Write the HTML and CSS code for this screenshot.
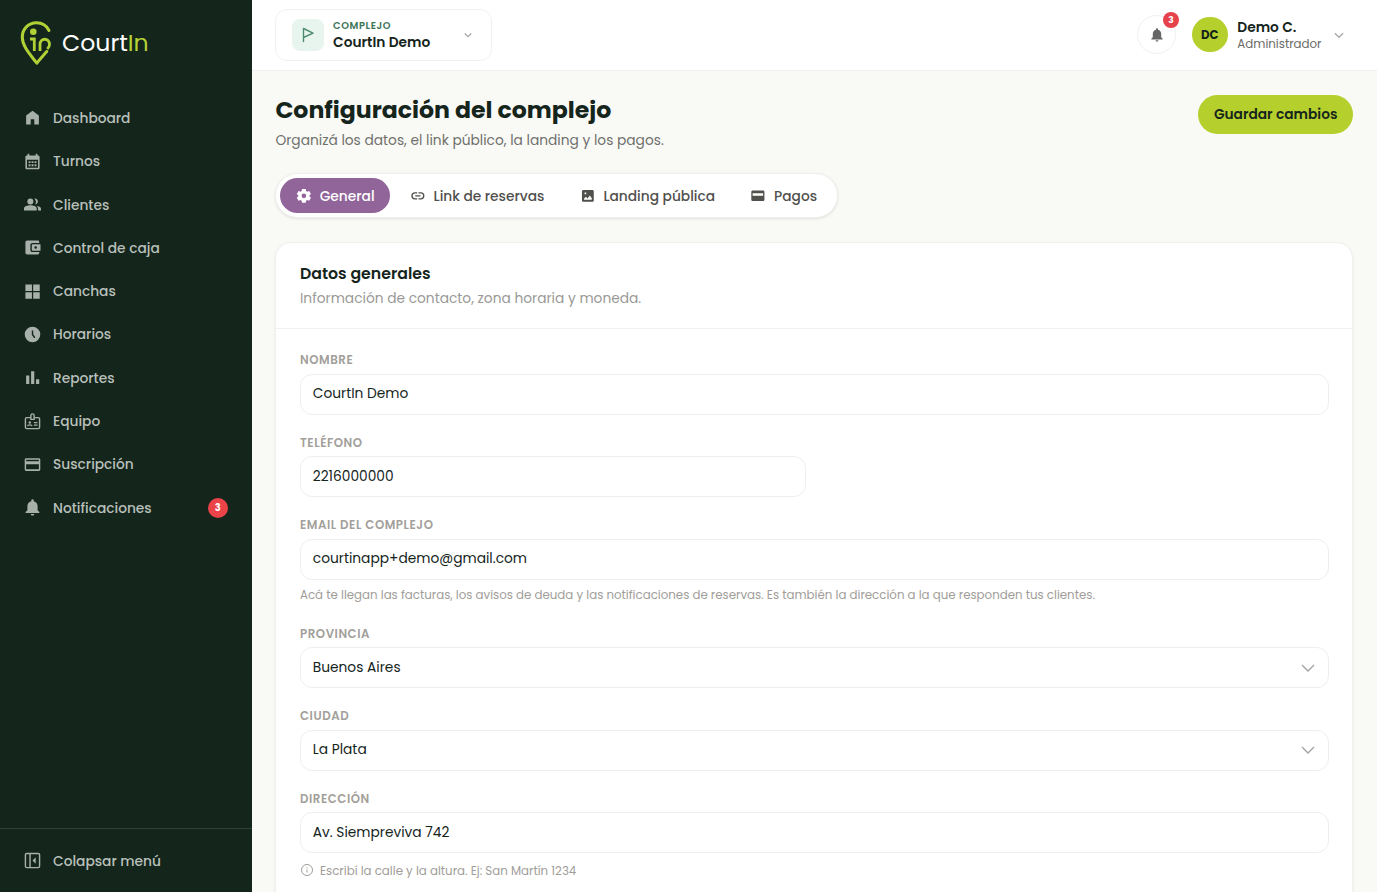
FILE: index.html
```html
<!DOCTYPE html>
<html lang="es">
<head>
  <meta charset="UTF-8" />
  <title>CourtIn - Configuración del complejo</title>
  <link rel="stylesheet" href="styles.css">
</head>
<body>
  <div class="app">
    <aside class="sidebar">
      <div class="logo">
        <svg class="logo-pin" viewBox="0 0 32 46" fill="none" stroke="#b0d136" stroke-linecap="round">
          <path d="M29 10.500C26.500 5.500 22 2.800 16.500 2.800 8.500 2.800 2.300 9 2.300 17c0 9.500 8 17.500 14.500 26.200 3.500-4.700 6.500-7.700 10-11.700" stroke-width="3" stroke-linejoin="round"/>
          <circle cx="13.300" cy="11.800" r="3.300" fill="#b0d136" stroke="none"/>
          <path d="M10 19h4.300V31M20 31v-6.500c0-7 9.500-7 9.500 0 0 2-.7 3-2.300 4.500" stroke-width="2.800" stroke-linecap="butt"/>
        </svg>
        <span class="logo-text">Court<b>In</b></span>
      </div>
      <nav class="menu">
        <a class="menu-item"><svg viewBox="0 0 24 24"><path d="M12 2.500 3 9.300V22H9.500v-7.500h5V22H21V9.300z"/></svg><span>Dashboard</span></a>
        <a class="menu-item"><svg viewBox="0 0 24 24"><path fill-rule="evenodd" d="M5 1h2.500v2.500h9V1H19v2.500h1c1.100 0 2 .9 2 2V21c0 1.100-.9 2-2 2H4c-1.100 0-2-.9-2-2V5.500c0-1.100.9-2 2-2h1zM4.200 9.500v11.300h15.600V9.500zM6.500 11.500h2.700v2.700H6.500zm4.200 0h2.700v2.700h-2.700zm4.200 0h2.700v2.700h-2.700zM6.500 16h2.700v2.700H6.500zm4.200 0h2.700v2.700h-2.700zm4.200 0h2.700v2.700h-2.700z"/></svg><span>Turnos</span></a>
        <a class="menu-item"><svg viewBox="0 0 24 24"><path d="M9 3.500a4.300 4.300 0 1 1 0 8.600 4.300 4.300 0 0 1 0-8.600zM0 20.500v-2.800c0-3 5-4.500 9-4.500s9 1.500 9 4.500v2.800zM14.500 3.700c5.500-1.200 7.500 7 1.300 8.300 1.600-2.300 1.400-6-1.300-8.300zM17.500 13.800c3.500.5 6.500 1.800 6.500 4.200v2.500h-4.200v-2.800c0-1.600-.8-2.900-2.300-3.900z"/></svg><span>Clientes</span></a>
        <a class="menu-item"><svg viewBox="0 0 24 24"><path fill-rule="evenodd" d="M21.500 18.500v1.300c0 1.100-.9 2-2 2h-15c-1.300 0-2.500-1-2.500-2.300v-15C2 3.200 3.200 2.200 4.500 2.200h15c1.100 0 2 .9 2 2v1.300H12c-1.700 0-3 1.300-3 3v7c0 1.700 1.300 3 3 3zM12.500 7.500h10.800v9H12.500c-.8 0-1.500-.6-1.500-1.400V9c0-.9.700-1.500 1.500-1.500zm4 2.700a1.800 1.800 0 1 0 0 3.600 1.800 1.800 0 0 0 0-3.600z"/></svg><span>Control de caja</span></a>
        <a class="menu-item"><svg viewBox="0 0 24 24"><path d="M2 2h9.200v9.200H2zM13 2h9.200v9.200H13zM2 13h9.200v9.200H2zM13 13h9.200v9.200H13z"/></svg><span>Canchas</span></a>
        <a class="menu-item"><svg viewBox="0 0 24 24"><path fill-rule="evenodd" d="M12 1a11 11 0 1 0 0 22 11 11 0 0 0 0-22zM11 6.500h2v5.300l3 4.200-1.700 1.200-3.300-4.700z"/></svg><span>Horarios</span></a>
        <a class="menu-item"><svg viewBox="0 0 24 24"><path d="M3 9h4.500v12H3zM10 3h4.500v18H10zM17 14.500h4.500V21H17z"/></svg><span>Reportes</span></a>
        <a class="menu-item"><svg viewBox="0 0 24 24" fill="none" stroke="currentColor" stroke-width="2"><path d="M9 6.500H4c-1 0-2 .7-2 2V20c0 1.200 1 2 2 2h16c1 0 2-.8 2-2V8.500c0-1.300-1-2-2-2h-5"/><path d="M9.700 9V3.500c0-3 4.600-3 4.600 0V9z"/><path d="M14 13.500h5M14 17h5M5 18.500c.5-2.500 6-2.500 6.500 0" stroke-width="1.700"/><circle cx="8.200" cy="13.500" r="1.700" fill="currentColor" stroke="none"/></svg><span>Equipo</span></a>
        <a class="menu-item"><svg viewBox="0 0 24 24"><path fill-rule="evenodd" d="M3 3h18c1.100 0 2 .9 2 2v14c0 1.100-.9 2-2 2H3c-1.100 0-2-.9-2-2V5c0-1.100.9-2 2-2zm0 2.300v2.200h18V5.300zM3 11.500v7.200h18v-7.200z"/></svg><span>Suscripción</span></a>
        <a class="menu-item"><svg viewBox="0 0 24 24"><path d="M12 .5c1 0 1.700.7 1.700 1.700v.9c3.500.7 5.500 3.700 5.500 7.100V16l2.500 2.400v1.400H2.300v-1.400L4.800 16v-5.800c0-3.400 2-6.400 5.500-7.100v-.9C10.300 1.200 11 .5 12 .5zM9.500 21h5c0 3.200-5 3.200-5 0z"/></svg><span>Notificaciones</span><em class="menu-badge">3</em></a>
      </nav>
      <div class="collapse">
        <a class="menu-item"><svg viewBox="0 0 24 24" fill="none" stroke="currentColor" stroke-width="2"><rect x="2" y="2" width="20" height="20" rx="2"/><path d="M8.500 2v20"/><path d="m16.500 7.500-4.500 4.500 4.500 4.500z" fill="currentColor" stroke="none"/></svg><span>Colapsar menú</span></a>
      </div>
    </aside>

    <div class="content">
      <header class="topbar">
        <div class="complex">
          <div class="complex-icon">
            <svg viewBox="0 0 16 16" fill="none" stroke="#4d8a6e" stroke-width="1.400" stroke-linecap="round" stroke-linejoin="round"><path d="M3.500 14.500v-13l9.500 4.700-9.500 4.300"/></svg>
          </div>
          <div class="complex-text">
            <small>COMPLEJO</small>
            <strong>CourtIn Demo</strong>
          </div>
          <svg class="chev chev-small" viewBox="0 0 10 10"><path d="m2.300 3.700 2.700 2.700 2.700-2.700"/></svg>
        </div>
        <div class="user">
          <div class="bell">
            <svg viewBox="0 0 24 24"><path d="M12 .5c1 0 1.700.7 1.700 1.700v.9c3.500.7 5.500 3.700 5.500 7.100V16l2.500 2.400v1.400H2.300v-1.400L4.800 16v-5.800c0-3.400 2-6.400 5.500-7.100v-.9C10.300 1.200 11 .5 12 .5zM9.500 21h5c0 3.200-5 3.200-5 0z"/></svg>
            <em class="bell-badge">3</em>
          </div>
          <div class="avatar">DC</div>
          <div class="user-text">
            <strong>Demo C.</strong>
            <span>Administrador</span>
          </div>
          <svg class="chev" viewBox="0 0 10 10"><path d="m1.600 3.500 3.400 3.400 3.400-3.400"/></svg>
        </div>
      </header>

      <main class="page">
        <div class="page-head">
          <div>
            <h1>Configuración del complejo</h1>
            <p class="subtitle">Organizá los datos, el link público, la landing y los pagos.</p>
          </div>
          <button class="save">Guardar cambios</button>
        </div>

        <div class="tabs">
          <a class="tab active"><svg viewBox="0 0 24 24"><path fill-rule="evenodd" d="m9.300 1.500-.7 3.100-1.700 1-3-1L1.200 9.300 3.600 11.400v1.300l-2.400 2.100 2.700 4.600 3-1 1.700 1 .7 3.100h5.400l.7-3.100 1.700-1 3 1 2.700-4.600-2.400-2.100v-1.300l2.400-2.100-2.700-4.700-3 1-1.700-1-.7-3.100zM12 8.500a3.500 3.500 0 1 1 0 7 3.500 3.500 0 0 1 0-7z"/></svg><span>General</span></a>
          <a class="tab"><svg viewBox="0 0 24 24" fill="none" stroke="currentColor" stroke-width="2"><path d="M11 7.500H7.500a4.500 4.500 0 0 0 0 9H11M13 7.500h3.500a4.500 4.500 0 0 1 0 9H13M8 12h8"/></svg><span>Link de reservas</span></a>
          <a class="tab"><svg viewBox="0 0 24 24"><path fill-rule="evenodd" d="M5 3h14c1.100 0 2 .9 2 2v14c0 1.100-.9 2-2 2H5c-1.100 0-2-.9-2-2V5c0-1.100.9-2 2-2zm2 4v2.500h2.500V7zM6 18h12v-2.500L15 11.500 11.500 16 9 13.500 6 16.500z"/></svg><span>Landing pública</span></a>
          <a class="tab"><svg viewBox="0 0 24 24"><path fill-rule="evenodd" d="M4 4h16c1.100 0 2 .9 2 2v12c0 1.100-.9 2-2 2H4c-1.100 0-2-.9-2-2V6c0-1.100.9-2 2-2zm0 4v4h16V8z"/></svg><span>Pagos</span></a>
        </div>

        <section class="card">
          <div class="card-head">
            <h2>Datos generales</h2>
            <p>Información de contacto, zona horaria y moneda.</p>
          </div>
          <div class="card-body">
            <div class="field">
              <label>NOMBRE</label>
              <div class="input">CourtIn Demo</div>
            </div>
            <div class="field half">
              <label>TELÉFONO</label>
              <div class="input">2216000000</div>
            </div>
            <div class="field">
              <label>EMAIL DEL COMPLEJO</label>
              <div class="input">courtinapp+demo@gmail.com</div>
              <p class="hint">Acá te llegan las facturas, los avisos de deuda y las notificaciones de reservas. Es también la dirección a la que responden tus clientes.</p>
            </div>
            <div class="field">
              <label>PROVINCIA</label>
              <div class="input select">Buenos Aires<svg viewBox="0 0 16 16"><path d="m2 5 6 6 6-6"/></svg></div>
            </div>
            <div class="field">
              <label>CIUDAD</label>
              <div class="input select">La Plata<svg viewBox="0 0 16 16"><path d="m2 5 6 6 6-6"/></svg></div>
            </div>
            <div class="field">
              <label>DIRECCIÓN</label>
              <div class="input">Av. Siempreviva 742</div>
              <p class="hint hint-info"><svg viewBox="0 0 14 14" fill="none" stroke="currentColor"><circle cx="7" cy="7" r="5.500"/><path d="M7 6.500v3M7 4.300v1"/></svg>Escribí la calle y la altura. Ej: San Martín 1234</p>
            </div>
          </div>
        </section>
      </main>
    </div>
  </div>
</body>
</html>
```
FILE: styles.css
```css
* {
  box-sizing: border-box;
}

body {
  margin: 0;
  font-family: Poppins, Inter, sans-serif;
  font-size: 13.770px;
  color: #15251c;
  background: #f9faf6;
}

h1, h2, p {
  margin: 0;
}

em {
  font-style: normal;
}

.app {
  display: flex;
  height: 892px;
  overflow: hidden;
}

/* sidebar */
.sidebar {
  width: 251.800px;
  flex-shrink: 0;
  display: flex;
  flex-direction: column;
  background: #14251c;
  color: #b9c0bb;
}

.logo {
  display: flex;
  align-items: center;
  gap: 10px;
  padding: 20px 20px 0;
  height: 66px;
}

.logo-pin {
  width: 32px;
  height: 46px;
}

.logo-text {
  font-size: 23.600px;
  line-height: 30px;
  color: #fff;
}

.logo-text b {
  font-weight: 400;
  color: #b5d334;
}

.menu {
  padding-top: 30.300px;
}

.menu-item {
  display: flex;
  align-items: center;
  height: 43.300px;
  padding: 0 24px;
  font-weight: 500;
}

.menu-item span {
  padding-top: 2px;
}

.menu-item svg {
  width: 17px;
  height: 17px;
  margin-right: 12px;
  fill: currentColor;
  opacity: 0.9;
}

.menu-item svg[fill="none"] {
  fill: none;
}

.menu-badge {
  margin-left: auto;
  width: 20px;
  height: 20px;
  border-radius: 50%;
  background: #ea4348;
  color: #fff;
  font-size: 9.840px;
  font-weight: 700;
  line-height: 20px;
  text-align: center;
}

.collapse {
  margin-top: auto;
  height: 64px;
  padding-top: 10px;
  border-top: 1px solid #2d4236;
}

/* topbar */
.content {
  flex: 1;
  min-width: 0;
}

.topbar {
  display: flex;
  justify-content: space-between;
  align-items: center;
  height: 71px;
  padding: 0 32px 1px 23.600px;
  background: #fff;
  border-bottom: 1px solid #f0f1ee;
}

.complex {
  display: flex;
  align-items: center;
  width: 216.500px;
  height: 52px;
  padding: 0 17px 0 15.700px;
  border: 1px solid #f0f1f0;
  border-radius: 12px;
}

.complex-icon {
  display: flex;
  align-items: center;
  justify-content: center;
  width: 32px;
  height: 32px;
  margin-right: 9px;
  border-radius: 8px;
  background: #e8f5ef;
}

.complex-icon svg {
  width: 16px;
  height: 16px;
}

.complex-text {
  display: flex;
  flex-direction: column;
  padding-top: 2px;
}

.complex-text small {
  font-size: 9.840px;
  font-weight: 600;
  line-height: 14px;
  letter-spacing: 0.600px;
  color: #3c7457;
}

.complex-text strong {
  font-weight: 600;
  line-height: 20px;
}

.chev {
  width: 12px;
  height: 12px;
  margin-left: 11px;
  fill: none;
  stroke: #a8a8a8;
  stroke-width: 1.100;
}

.chev-small {
  margin-left: auto;
}

.user {
  display: flex;
  align-items: center;
}

.bell {
  position: relative;
  display: flex;
  align-items: center;
  justify-content: center;
  width: 39px;
  height: 39px;
  margin-right: 16px;
  border: 1px solid #f0f0f0;
  border-radius: 50%;
}

.bell svg {
  width: 14px;
  height: 14px;
  fill: #666;
}

.bell-badge {
  position: absolute;
  top: -4px;
  right: -4px;
  width: 16px;
  height: 16px;
  border-radius: 50%;
  background: #e5424b;
  color: #fff;
  font-size: 9px;
  font-weight: 700;
  line-height: 16px;
  text-align: center;
}

.avatar {
  width: 35.500px;
  height: 35.500px;
  margin-right: 9.800px;
  border-radius: 50%;
  background: #b5d02d;
  font-size: 11.800px;
  font-weight: 700;
  line-height: 37px;
  text-align: center;
}

.user-text {
  display: flex;
  flex-direction: column;
  width: 84.700px;
  padding-top: 3.500px;
}

.user-text strong {
  font-weight: 600;
  line-height: 17px;
}

.user-text span {
  font-size: 11.800px;
  line-height: 17px;
  color: #6b6b68;
}

/* page */
.page {
  padding: 23.600px 23.600px 0;
}

.page-head {
  display: flex;
  justify-content: space-between;
  align-items: flex-start;
}

h1 {
  font-size: 23.600px;
  font-weight: 700;
  line-height: 30.500px;
}

.subtitle {
  margin-top: 5.500px;
  line-height: 20px;
  color: #70706c;
}

.save {
  width: 155.500px;
  height: 39px;
  padding: 1.500px 0 0;
  border: none;
  border-radius: 20px;
  background: #b5d02d;
  color: #15251c;
  font-family: inherit;
  font-size: 13.770px;
  font-weight: 600;
}

.tabs {
  display: flex;
  gap: 3.940px;
  width: 562.500px;
  height: 45px;
  margin-top: 22.500px;
  padding: 4px;
  border: 1px solid #f0f1ee;
  border-radius: 23px;
  background: #fff;
  box-shadow: 0 1px 3px rgba(0,0,0,0.1);
}

.tab {
  display: flex;
  align-items: center;
  flex-shrink: 0;
  height: 35.400px;
  padding: 0 15.740px;
  border-radius: 18px;
  font-weight: 500;
  color: #50504d;
  white-space: nowrap;
}

.tab span {
  padding-top: 1.500px;
}

.tab svg {
  width: 15.740px;
  height: 15.740px;
  margin-right: 7.870px;
  fill: currentColor;
}

.tab svg[fill="none"] {
  fill: none;
}

.tab.active {
  background: #91659a;
  color: #fff;
}

.card {
  margin-top: 23.600px;
  height: 720px;
  border: 1px solid #f0f1ee;
  border-radius: 16px;
  background: #fff;
  box-shadow: 0 1px 3px rgba(0,0,0,0.06);
}

.card-head {
  height: 86px;
  padding: 18.800px 23.600px 0;
  border-bottom: 1px solid #f1f2ef;
}

.card-head h2 {
  font-size: 15.740px;
  font-weight: 600;
  line-height: 25px;
}

.card-head p {
  line-height: 25px;
  color: #999996;
}

.card-body {
  padding: 21.500px 23.600px 0;
}

.field {
  margin-bottom: 18px;
}

.half {
  width: 506.500px;
}

.field label {
  display: block;
  height: 18px;
  margin-bottom: 5.600px;
  font-size: 11.800px;
  font-weight: 600;
  line-height: 20.500px;
  letter-spacing: 0.550px;
  color: #a39f9b;
}

.input {
  display: flex;
  align-items: center;
  justify-content: space-between;
  height: 41px;
  padding: 0 11.800px;
  border: 1px solid #eeefed;
  border-radius: 12px;
}

.select svg {
  width: 16px;
  height: 16px;
  fill: none;
  stroke: #a3a3a3;
  stroke-width: 1.400;
}

.hint {
  display: flex;
  align-items: center;
  height: 19.600px;
  margin-top: 6px;
  font-size: 11.800px;
  color: #a09d99;
  white-space: nowrap;
}

.hint-info {
  margin-top: 8.500px;
}

.hint-info svg {
  width: 14px;
  height: 14px;
  margin: -3px 6px 0 0;
}
```
